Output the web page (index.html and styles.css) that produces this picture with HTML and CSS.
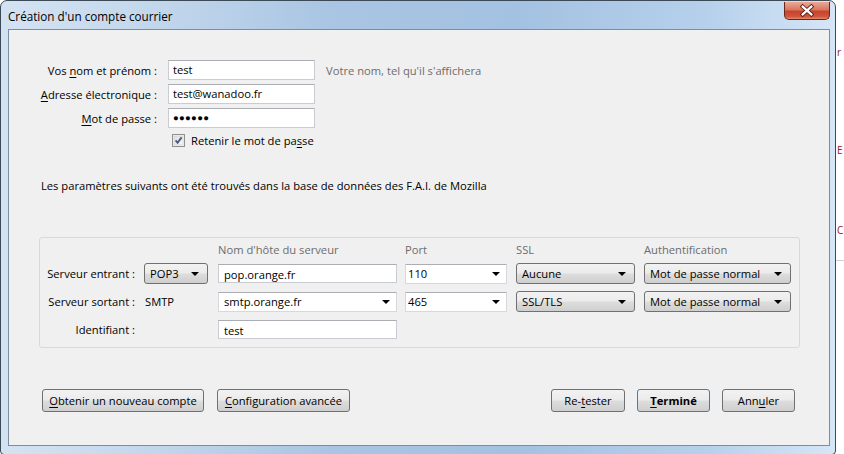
FILE: index.html
```html
<!DOCTYPE html>
<html lang="fr">
<head>
    <meta charset="UTF-8">
    <title>Création d'un compte courrier</title>
    <link rel="stylesheet" href="styles.css">
</head>
<body>
    <div class="desktop">
        <div class="window">
            <div class="titlebar">
                <span class="title">Création d'un compte courrier</span>
                <button class="close-btn">
                    <svg width="46" height="17" viewBox="0 0 46 17">
                        <path d="M18.5 4.5L27.5 12.5M27.5 4.5L18.5 12.5" stroke="#5a1a10" stroke-width="4.2" stroke-linecap="square"/>
                        <path d="M18.5 4.5L27.5 12.5M27.5 4.5L18.5 12.5" stroke="#ffffff" stroke-width="2.4" stroke-linecap="square"/>
                    </svg>
                </button>
            </div>

            <div class="client">
                <div class="identity">
                    <label>Vos <u>n</u>om et prénom :</label>
                    <div class="textbox">test</div>
                    <span class="hint">Votre nom, tel qu'il s'affichera</span>

                    <label><u>A</u>dresse électronique :</label>
                    <div class="textbox">test@wanadoo.fr</div>
                    <span></span>

                    <label><u>M</u>ot de passe :</label>
                    <div class="textbox password">●●●●●●</div>
                    <span></span>

                    <div class="remember">
                        <svg class="checkbox" width="13" height="13" viewBox="0 0 13 13">
                            <defs>
                                <linearGradient id="cb" x1="0" y1="0" x2="1" y2="1">
                                    <stop offset="0" stop-color="#dcdcdc"/>
                                    <stop offset="1" stop-color="#fbfbfb"/>
                                </linearGradient>
                            </defs>
                            <rect x="0.5" y="0.5" width="12" height="12" fill="#f6f6f6" stroke="#8f8f8f"/>
                            <rect x="2" y="2" width="9" height="9" fill="url(#cb)" stroke="#c8c8c8" stroke-width="0.6"/>
                            <path d="M3.6 6.4L5.6 8.8L9.6 3.4" fill="none" stroke="#4a5a82" stroke-width="1.9"/>
                        </svg>
                        <span>Retenir le mot de pa<u>s</u>se</span>
                    </div>
                </div>

                <p class="notice">Les paramètres suivants ont été trouvés dans la base de données des F.A.I. de Mozilla</p>

                <div class="servers">
                    <span></span>
                    <span></span>
                    <span class="col-head">Nom d'hôte du serveur</span>
                    <span class="col-head">Port</span>
                    <span class="col-head">SSL</span>
                    <span class="col-head">Authentification</span>

                    <label>Serveur entrant :</label>
                    <div class="dropdown w-proto"><span>POP3</span><i class="arrow"></i></div>
                    <div class="textbox w-host">pop.orange.fr</div>
                    <div class="combo w-port"><span>110</span><i class="arrow"></i></div>
                    <div class="dropdown w-ssl"><span>Aucune</span><i class="arrow"></i></div>
                    <div class="dropdown w-auth"><span>Mot de passe normal</span><i class="arrow"></i></div>

                    <label>Serveur sortant :</label>
                    <span class="proto">SMTP</span>
                    <div class="combo w-host host-combo"><span>smtp.orange.fr</span><i class="arrow"></i></div>
                    <div class="combo w-port"><span>465</span><i class="arrow"></i></div>
                    <div class="dropdown w-ssl"><span>SSL/TLS</span><i class="arrow"></i></div>
                    <div class="dropdown w-auth"><span>Mot de passe normal</span><i class="arrow"></i></div>

                    <label>Identifiant :</label>
                    <span></span>
                    <div class="textbox w-host">test</div>
                </div>

                <div class="actions">
                    <button class="btn btn-new"><u>O</u>btenir un nouveau compte</button>
                    <button class="btn btn-advanced"><u>C</u>onfiguration avancée</button>
                    <span class="spacer"></span>
                    <button class="btn btn-retest">Re-<u>t</u>ester</button>
                    <button class="btn btn-done"><u>T</u>erminé</button>
                    <button class="btn btn-cancel">Ann<u>u</u>ler</button>
                </div>
            </div>
        </div>

        <!-- ce qui dépasse de la fenêtre derrière -->
        <div class="behind">
            <span class="peek" style="top: 45px">r</span>
            <span class="peek" style="top: 143px">E</span>
            <span class="peek" style="top: 223px">C</span>
            <span class="peek-line"></span>
        </div>
    </div>
</body>
</html>
```

FILE: styles.css
```css
body {
    margin: 0;
    padding: 0;
    font-family: "Open Sans", "Noto Sans", sans-serif;
    font-size: 11.2px;
    color: #000;
    background-color: #ffffff;
    overflow: hidden;
}

u {
    text-decoration-thickness: 1px;
    text-underline-offset: 2px;
}

.desktop {
    display: flex;
    width: 844px;
    height: 454px;
}

/* Fenêtre Aero */
.window {
    width: 834px;
    height: 453px;
    display: flex;
    flex-direction: column;
    border: 1px solid #3c4a58;
    border-radius: 7px 7px 4px 4px;
    background: linear-gradient(90deg, #d4e3f2 0%, #c3d7ec 18%, #a9c5e3 40%, #a3c1e1 62%, #b7d1ec 85%, #d5e6f6 100%);
}

.titlebar {
    height: 28px;
    display: flex;
    align-items: flex-start;
    justify-content: space-between;
}

.title {
    margin: 7px 0 0 7px;
    font-size: 11.7px;
    color: #000;
}

.close-btn {
    width: 46px;
    height: 18px;
    margin: 1px 5px 0 0;
    padding: 0;
    border: 1px solid #6b2519;
    border-top: none;
    border-radius: 0 0 5px 5px;
    background: linear-gradient(#e9a998 0%, #d9775f 45%, #c7432a 55%, #d0553c 85%, #e38a6a 100%);
    display: flex;
}

.client {
    height: 415px;
    margin: 0 5px 0 7px;
    border: 1px solid #7c8da0;
    background-color: #f0f0f0;
}

/* Identité */
.identity {
    display: grid;
    grid-template-columns: 148px 147px auto;
    grid-template-rows: 20px 20px 20px 16px;
    column-gap: 11px;
    row-gap: 4px;
    margin-top: 30px;
    align-items: center;
}

.identity label {
    text-align: right;
}

.textbox {
    height: 18px;
    line-height: 18px;
    padding: 0 4px;
    background-color: #fff;
    border: 1px solid #c9ccd3;
    border-top-color: #abadb3;
    white-space: nowrap;
    overflow: hidden;
}

.password {
    font-size: 9.5px;
    letter-spacing: 0.3px;
}

.hint,
.col-head {
    color: #6d6d6d;
}

.remember {
    grid-column: 2 / span 2;
    display: flex;
    align-items: center;
    gap: 6px;
    padding-left: 4px;
}

.notice {
    margin: 30px 0 0 32px;
    line-height: 16px;
}

/* Serveurs */
.servers {
    display: grid;
    grid-template-columns: 96px 74px 187px 111px 128px 147px;
    grid-template-rows: 14px 21px 21px 21px;
    row-gap: 7px;
    align-items: center;
    width: 751px;
    margin: 43px 0 0 30px;
    padding: 4px 0 7px 8px;
    border: 1px solid #d9d9d9;
    border-radius: 3px;
}

.servers label {
    justify-self: end;
    white-space: nowrap;
    padding-right: 9px;
}

.proto {
    padding-left: 1px;
}

.w-proto { width: 64px; }
.w-host { width: 179px; }
.w-port { width: 102px; }
.w-ssl { width: 119px; }
.w-auth { width: 147px; }

.servers .textbox {
    height: 19px;
    line-height: 19px;
    padding: 0 5px;
    box-sizing: border-box;
}

.dropdown,
.combo {
    box-sizing: border-box;
    height: 21px;
    display: flex;
    align-items: center;
    justify-content: space-between;
    white-space: nowrap;
}

.dropdown {
    padding: 0 8px 0 5px;
    border: 1px solid #707070;
    border-radius: 3px;
    background: linear-gradient(#f2f2f2 0%, #ebebeb 48%, #dddddd 52%, #cfcfcf 100%);
}

.combo {
    height: 20px;
    padding: 0 6px 0 2px;
    background-color: #fff;
    border: 1px solid #d5d8de;
    border-top-color: #abadb3;
}

.host-combo {
    padding-left: 5px;
}

.arrow {
    width: 0;
    height: 0;
    border-left: 4px solid transparent;
    border-right: 4px solid transparent;
    border-top: 4px solid #000;
    margin-top: 1px;
}

/* Boutons */
.actions {
    display: flex;
    margin-top: 41px;
    padding: 0 34px 0 33px;
}

.spacer {
    flex: 1;
}

.btn {
    height: 23px;
    padding: 0;
    font-family: inherit;
    font-size: 11.2px;
    color: #000;
    border: 1px solid #707070;
    border-radius: 3px;
    background: linear-gradient(#f2f2f2 0%, #ebebeb 48%, #dddddd 52%, #cfcfcf 100%);
}

.btn-new { width: 162px; }
.btn-advanced { width: 133px; margin-left: 13px; }
.btn-retest { width: 74px; }
.btn-done { width: 73px; margin-left: 12px; font-weight: bold; border-color: #3c7fb1; }
.btn-cancel { width: 73px; margin-left: 12px; }

/* Arrière-plan visible à droite de la fenêtre */
.behind {
    flex: 1;
    position: relative;
    overflow: hidden;
}

.peek {
    position: absolute;
    left: 1px;
    color: #9b2020;
    font-size: 10px;
}

.peek-line {
    position: absolute;
    left: 0;
    right: 0;
    top: 260px;
    border-top: 1px solid #d0d0d0;
}
```
